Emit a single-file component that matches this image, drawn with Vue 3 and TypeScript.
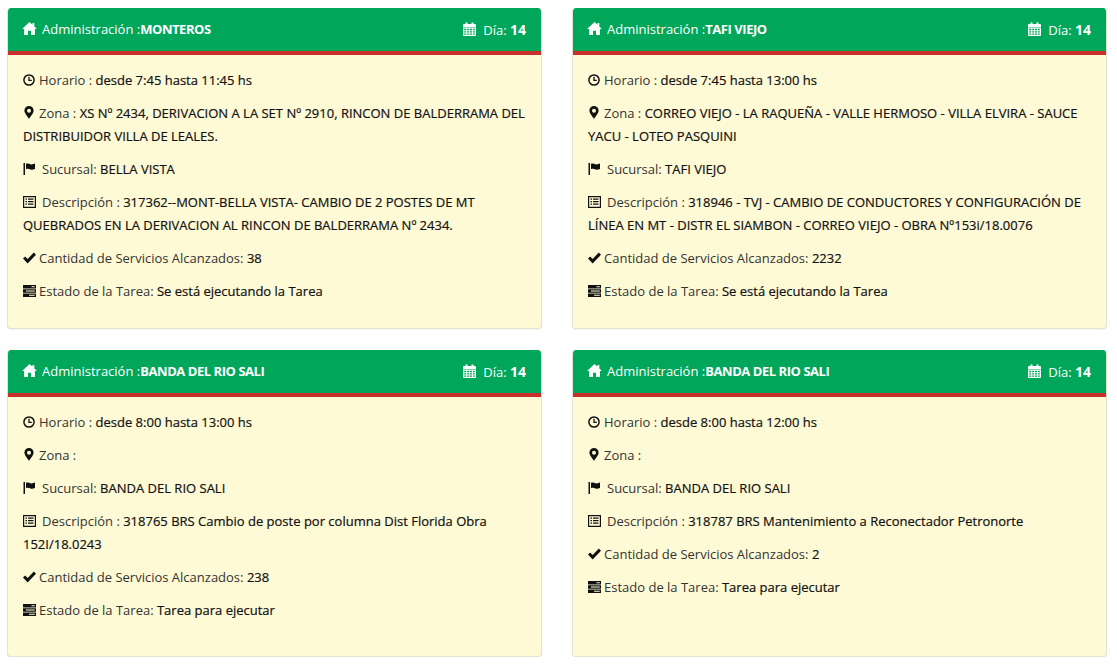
<script setup lang="ts">
interface Card {
  admin: string
  dia: number
  horario: string
  zona: string
  sucursal: string
  descripcion: string
  cantidad?: string
  estado: string
}

const cards: Card[] = [
  {
    admin: 'MONTEROS',
    dia: 14,
    horario: 'desde 7:45 hasta 11:45 hs',
    zona: 'XS Nº 2434, DERIVACION A LA SET Nº 2910, RINCON DE BALDERRAMA DEL DISTRIBUIDOR VILLA DE LEALES.',
    sucursal: 'BELLA VISTA',
    descripcion: '317362--MONT-BELLA VISTA- CAMBIO DE 2 POSTES DE MT QUEBRADOS EN LA DERIVACION AL RINCON DE BALDERRAMA Nº 2434.',
    cantidad: '38',
    estado: 'Se está ejecutando la Tarea',
  },
  {
    admin: 'TAFI VIEJO',
    dia: 14,
    horario: 'desde 7:45 hasta 13:00 hs',
    zona: 'CORREO VIEJO - LA RAQUEÑA - VALLE HERMOSO - VILLA ELVIRA - SAUCE YACU - LOTEO PASQUINI',
    sucursal: 'TAFI VIEJO',
    descripcion: '318946 - TVJ - CAMBIO DE CONDUCTORES Y CONFIGURACIÓN DE LÍNEA EN MT - DISTR EL SIAMBON - CORREO VIEJO - OBRA Nº153i/18.0076',
    cantidad: '2232',
    estado: 'Se está ejecutando la Tarea',
  },
  {
    admin: 'BANDA DEL RIO SALI',
    dia: 14,
    horario: 'desde 8:00 hasta 13:00 hs',
    zona: '',
    sucursal: 'BANDA DEL RIO SALI',
    descripcion: '318765 BRS Cambio de poste por columna Dist Florida Obra 152I/18.0243',
    cantidad: '238',
    estado: 'Tarea para ejecutar',
  },
  {
    admin: 'BANDA DEL RIO SALI',
    dia: 14,
    horario: 'desde 8:00 hasta 12:00 hs',
    zona: '',
    sucursal: 'BANDA DEL RIO SALI',
    descripcion: '318787 BRS Mantenimiento a Reconectador Petronorte',
    cantidad: '2',
    estado: 'Tarea para ejecutar',
  },
]
</script>

<template>
  <div class="grid">
    <section v-for="(c, i) in cards" :key="i" class="card">
      <header class="head">
        <div class="head-left">
          <svg class="ico home" viewBox="0 0 16 14"><path d="M8 0 L11.2 3 V1.2 H13.2 V4.9 L16 7.6 H13.8 V14 H9.6 V9.4 H6.4 V14 H2.2 V7.6 H0 Z" fill="#fff" /></svg>
          <span class="admin">Administración :</span><b class="admin-name">{{ c.admin }}</b>
        </div>
        <div class="head-right">
          <svg class="ico cal" viewBox="0 0 13 14">
            <path fill="#fff" d="M1 2h1.5V.5h2V2h4V.5h2V2H12a1 1 0 0 1 1 1v2H0V3a1 1 0 0 1 1-1Z" />
            <path fill="#fff" fill-rule="evenodd" d="M0 5.6h13V13a1 1 0 0 1-1 1H1a1 1 0 0 1-1-1ZM1.2 6.8v1.4h2V6.8Zm3 0v1.4h2V6.8Zm2.8 0v1.4h2V6.8Zm3 0v1.4h1.8V6.8ZM1.2 9.2v1.4h2V9.2Zm3 0v1.4h2V9.2Zm2.8 0v1.4h2V9.2Zm3 0v1.4h1.8V9.2ZM1.2 11.4v1.4h2v-1.4Zm3 0v1.4h2v-1.4Zm2.8 0v1.4h2v-1.4Zm3 0v1.4h1.8v-1.4Z" />
          </svg>
          <span class="dia">Día:</span> <b class="dia-num">{{ c.dia }}</b>
        </div>
      </header>
      <div class="body">
        <p>
          <svg class="ico i12" viewBox="0 0 12 12"><circle cx="6" cy="6" r="5.1" fill="none" stroke="#111" stroke-width="1.5" /><path d="M6 2.800V6.400H8.800" fill="none" stroke="#111" stroke-width="1.300" /></svg>
          <span class="lbl">Horario : </span><span class="val">{{ c.horario }}</span>
        </p>
        <p>
          <svg class="ico pin" viewBox="0 0 10 13"><path fill="#111" fill-rule="evenodd" d="M5 0a4.600 4.600 0 0 1 4.600 4.600C9.600 7.600 6 11 5 13 4 11 .4 7.600.4 4.600A4.600 4.600 0 0 1 5 0Zm0 2.700a2 2 0 1 0 0 4 2 2 0 0 0 0-4Z" /></svg>
          <span class="lbl">Zona : </span><span class="val">{{ c.zona }}</span>
        </p>
        <p>
          <svg class="ico flag" viewBox="0 0 13 12"><path fill="#111" d="M.5 0H2V12H.5Z" /><path fill="#111" d="M3 .8C5 0 6 .6 7.500 1.200c1.200.4 2.400.2 4.500-.6V6c-2 .8-3.300 1-4.500.5C6 5.900 5 5.300 3 6.200Z" /></svg>
          <span class="lbl">Sucursal: </span><span class="val">{{ c.sucursal }}</span>
        </p>
        <p>
          <svg class="ico list" viewBox="0 0 13 12"><path fill="#111" fill-rule="evenodd" d="M0 0h13v12H0Zm1.200 1.200v9.600h10.600V1.200Z" /><path fill="#111" d="M2.500 2.500h1.500v1.300H2.500Zm2.500 0h5.500v1.300H5ZM2.500 5h1.500v1.300H2.500ZM5 5h5.500v1.300H5ZM2.500 7.500h1.500v1.300H2.500Zm2.500 0h5.500v1.300H5Z" /></svg>
          <span class="lbl">Descripción : </span><span class="val">{{ c.descripcion }}</span>
        </p>
        <p v-if="c.cantidad">
          <svg class="ico i13" viewBox="0 0 14 12"><path fill="#111" d="M0 6.600 2.300 4.300 5 7 11.700 0 14 2.400 5 11.800Z" /></svg>
          <span class="lbl">Cantidad de Servicios Alcanzados: </span><span class="val">{{ c.cantidad }}</span>
        </p>
        <p>
          <svg class="ico i13" viewBox="0 0 13 12"><path fill="#111" fill-rule="evenodd" d="M0 0h13v3.600H0Zm8.500 1.300v1h3.300v-1ZM0 4.200h13v3.600H0Zm3 1.300v1h8.800v-1ZM0 8.400h13V12H0Zm6 1.300v1h5.800v-1Z" /></svg>
          <span class="lbl">Estado de la Tarea: </span><span class="val">{{ c.estado }}</span>
        </p>
      </div>
    </section>
  </div>
</template>

<style scoped>
.grid {
  display: grid;
  grid-template-columns: 535px 535px;
  grid-template-rows: 321px 307px;
  column-gap: 30px;
  row-gap: 21px;
  padding: 8px 0 0 7px;
  font-family: "Open Sans", sans-serif;
  font-size: 13px;
  color: #111;
}
.card {
  display: flex;
  flex-direction: column;
  background: #fffad6;
  border: 1px solid #e3e3d4;
  border-top: 0;
  border-radius: 4px;
  box-shadow: 0 1px 1px rgba(0, 0, 0, 0.05);
  overflow: hidden;
}
.head {
  display: flex;
  justify-content: space-between;
  align-items: center;
  padding: 0 16px 1px 15px;
  margin: 0 -1px;
  box-sizing: border-box;
  flex: none;
  height: 47px;
  background: #00a65a;
  border-bottom: 4px solid #c9302c;
  color: #fff;
}
.ico {
  display: inline-block;
  vertical-align: -1px;
}
.home {
  width: 15px;
  height: 13px;
  margin-right: 5px;
}
.cal {
  width: 13px;
  height: 14px;
  margin-right: 7px;
}
.admin-name {
  font-weight: 700;
  letter-spacing: -0.45px;
}
.dia-num {
  font-weight: 700;
  font-size: 14px;
}
.body {
  flex: 1;
  padding: 14px 15px;
}
p {
  margin: 0 0 10px;
  line-height: 23px;
}
.lbl {
  color: #333;
}
.val {
  color: #111;
  -webkit-text-stroke: 0.2px #111;
}
.i12 {
  width: 12px;
  height: 12px;
  margin-right: 4px;
}
.pin {
  width: 10px;
  height: 13px;
  margin: 0 5px 0 1px;
}
.flag {
  width: 13px;
  height: 12px;
  margin-right: 6px;
}
.list {
  width: 13px;
  height: 12px;
  margin-right: 6px;
}
.i13 {
  width: 13px;
  height: 12px;
  margin-right: 3px;
}
</style>

<style>
html, body {
  background: #fff;
}
</style>
